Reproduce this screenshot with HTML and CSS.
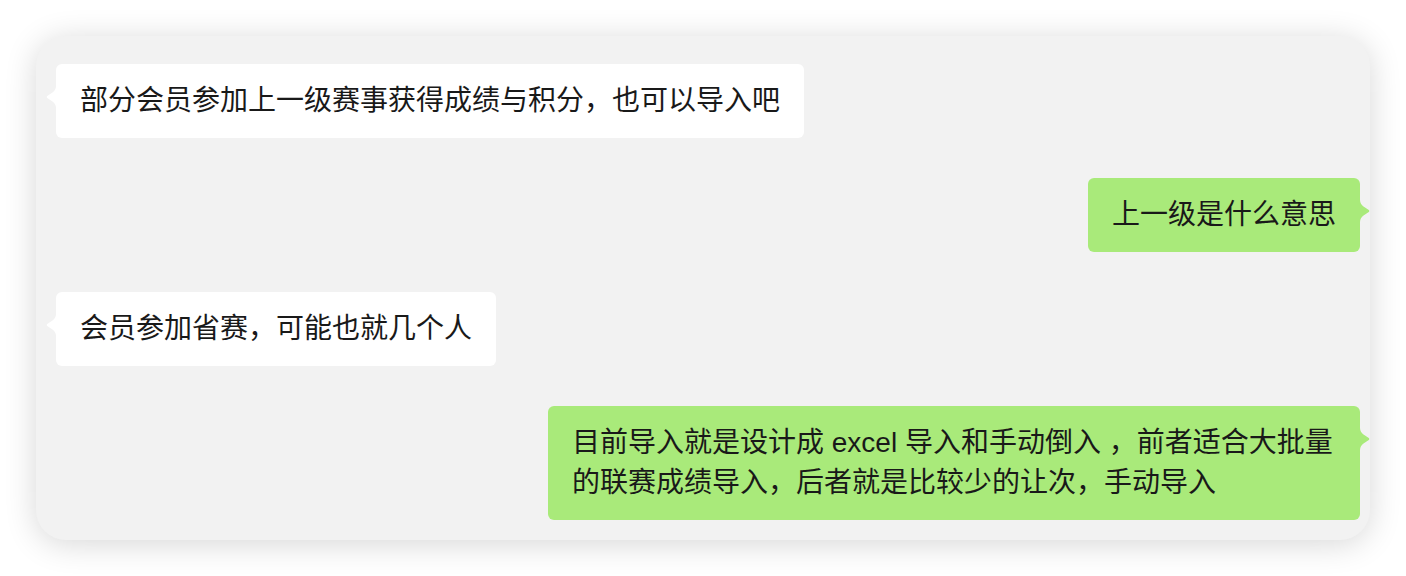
FILE: index.html
```html
<!DOCTYPE html>
<html lang="zh-CN">
<head>
    <meta charset="UTF-8">
    <meta name="viewport" content="width=device-width, initial-scale=1.0">
    <title>聊天记录</title>
    <link rel="stylesheet" href="styles.css">
</head>
<body>
    <div class="chat">
        <div class="row left">
            <div class="msg">部分会员参加上一级赛事获得成绩与积分，也可以导入吧</div>
        </div>
        <div class="row right">
            <div class="msg">上一级是什么意思</div>
        </div>
        <div class="row left">
            <div class="msg">会员参加省赛，可能也就几个人</div>
        </div>
        <div class="row right">
            <div class="msg">目前导入就是设计成 excel 导入和手动倒入 ，前者适合大批量的联赛成绩导入，后者就是比较少的让次，手动导入</div>
        </div>
    </div>
</body>
</html>
```

FILE: styles.css
```css
body {
    margin: 0;
    padding: 0;
    background-color: #fff;
    font-family: "Liberation Sans", "Noto Sans CJK SC", sans-serif;
}

.chat {
    margin: 36px;
    height: 504px;
    box-sizing: border-box;
    padding: 28px 10px 0 20px;
    background-color: #f2f2f2;
    border-radius: 30px;
    box-shadow: 0 4px 32px rgba(0, 0, 0, 0.16);
    display: flex;
    flex-direction: column;
    gap: 40px;
}

.row {
    display: flex;
}

.row.left {
    justify-content: flex-start;
}

.row.right {
    justify-content: flex-end;
}

.msg {
    position: relative;
    max-width: 764px;
    padding: 17px 24px;
    border-radius: 6px;
    font-size: 28px;
    line-height: 40px;
    color: #191919;
    background-color: #fff;
}

.right .msg {
    background-color: #a9ea7a;
}

/* little arrow next to the bubble */
.msg::before {
    content: "";
    position: absolute;
    top: 22px;
    width: 10px;
    height: 22px;
    background-color: inherit;
}

.left .msg::before {
    left: -10px;
    clip-path: path('M10 0 C10 3 8.5 5 6.5 6.5 L1.2 10 Q0 11 1.2 12 L6.5 15.5 C8.5 17 10 19 10 22 Z');
}

.right .msg::before {
    right: -10px;
    clip-path: path('M0 0 C0 3 1.5 5 3.5 6.5 L8.8 10 Q10 11 8.8 12 L3.5 15.5 C1.5 17 0 19 0 22 Z');
}
```
